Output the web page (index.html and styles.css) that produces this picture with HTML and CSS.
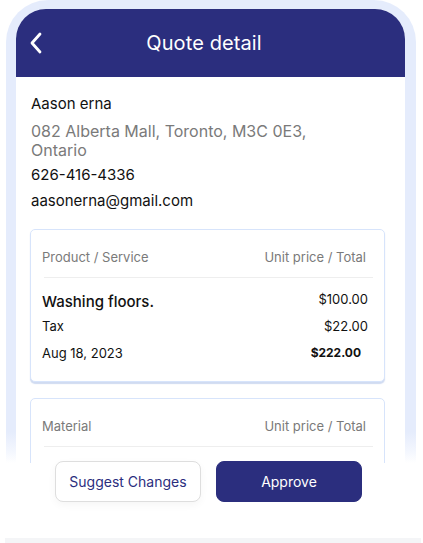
FILE: index.html
```html
<!DOCTYPE html>
<html lang="en">
<head>
<meta charset="utf-8">
<title>Quote detail</title>
<link rel="stylesheet" href="styles.css">
</head>
<body>
<div class="stage">
  <div class="phone">
    <div class="screen">
      <header class="topbar">
        <svg class="back" width="16" height="22" viewBox="0 0 16 22" aria-hidden="true">
          <polyline points="11,2 3,11 11,20" fill="none" stroke="#fff" stroke-width="2.8" stroke-linecap="round" stroke-linejoin="round"/>
        </svg>
        <h1 class="title">Quote detail</h1>
        <span class="spacer"></span>
      </header>
      <div class="content">
        <section class="contact">
          <p class="name">Aason erna</p>
          <p class="addr">082 Alberta Mall, Toronto, M3C 0E3,<br>Ontario</p>
          <p class="line phone-no">626-416-4336</p>
          <p class="line email">aasonerna@gmail.com</p>
        </section>
        <section class="card card-main">
          <div class="card-head"><span>Product / Service</span><span>Unit price / Total</span></div>
          <div class="divider"></div>
          <div class="row row-item"><span class="item-name">Washing floors.</span><span class="amt">$100.00</span></div>
          <div class="row row-tax"><span>Tax</span><span class="amt">$22.00</span></div>
          <div class="row row-total"><span>Aug 18, 2023</span><span class="total">$222.00</span></div>
        </section>
        <section class="card card-material">
          <div class="card-head"><span>Material</span><span>Unit price / Total</span></div>
          <div class="divider"></div>
        </section>
      </div>
    </div>
  </div>
  <div class="actions">
    <div class="btns">
      <button class="btn btn-ghost">Suggest Changes</button>
      <button class="btn btn-primary">Approve</button>
    </div>
    <div class="bottom-line"></div>
  </div>
</div>
</body>
</html>
```
FILE: styles.css
```css
* { box-sizing: border-box; }
html, body { margin: 0; padding: 0; background: #fff; }
body {
  font-family: Inter, "Noto Sans", "Liberation Sans", sans-serif;
  color: #111;
  width: 423px;
  height: 543px;
  overflow: hidden;
}
.stage {
  position: relative;
  width: 423px;
  height: 543px;
  overflow: hidden;
}
.phone {
  margin-left: 6px;
  width: 410px;
  height: 543px;
  padding: 9px 11px 0 10px;
  border-radius: 42px 42px 0 0;
  background: linear-gradient(to bottom, #e5ecfc 0, #e5ecfc 432px, #f4f7fe 452px, #ffffff 463px);
}
.screen {
  height: 100%;
  background: #fff;
  border-radius: 30px 30px 0 0;
  overflow: hidden;
}
.topbar {
  height: 68px;
  background: #2b2e7e;
  display: flex;
  align-items: center;
  padding: 0 14px 0 13px;
}
.back { display: block; flex: none; }
.title {
  flex: 1;
  margin: 0;
  text-align: center;
  color: #fff;
  font-size: 20px;
  font-weight: 400;
  letter-spacing: 0.1px;
  padding-right: 12px;
}
.spacer { width: 16px; flex: none; }
.content {
  height: 386px;
  overflow: hidden;
  padding: 17px 20px 0 14px;
}
.contact { padding-left: 1px; }
.contact p { margin: 0; }
.name { font-size: 15px; line-height: 20px; color: #111; }
.addr { font-size: 16px; line-height: 19px; color: #7a7a7a; margin-top: 7.5px !important; }
.line { font-size: 15px; line-height: 20px; color: #111; }
.phone-no { margin-top: 5.5px !important; }
.email { margin-top: 6px !important; }
.card {
  border: 1px solid #d7e4fb;
  border-radius: 5px;
  padding: 0 0 19px 11px;
  background: #fff;
}
.card-main {
  margin-top: 18px;
  box-shadow: 0 2px 1px rgba(170, 190, 230, 0.55);
}
.card + .card { margin-top: 16px; }
.card-material { height: 120px; }
.card-head {
  display: flex;
  justify-content: space-between;
  font-size: 13px;
  line-height: 18px;
  color: #7a7a7a;
  padding: 18px 18px 11px 0;
}
.divider {
  height: 1px;
  background: #eeeeee;
  margin: 0 11px 0 2px;
}
.row {
  display: flex;
  justify-content: space-between;
  font-size: 13px;
  line-height: 18px;
  color: #111;
  padding-right: 16px;
}
.row-item { margin-top: 12.5px; line-height: 22px; }
.item-name { font-size: 15px; font-weight: 500; }
.row-item .amt { line-height: 16px; }
.row-tax { margin-top: 4.5px; }
.row-total { margin-top: 9px; padding-right: 23px; }
.total { font-weight: 700; font-size: 12px; }
.actions {
  position: absolute;
  left: 0;
  right: 0;
  top: 463px;
  bottom: 0;
  background: #fff;
  display: flex;
  flex-direction: column;
}
.btns {
  display: flex;
  gap: 15px;
  padding-left: 55px;
  margin-top: -2px;
}
.btn {
  height: 41px;
  border-radius: 8px;
  font-family: Inter, "Noto Sans", "Liberation Sans", sans-serif;
  font-size: 14px;
  cursor: pointer;
}
.btn-ghost {
  width: 146px;
  background: #fff;
  border: 1px solid #dedede;
  color: #2b2e7e;
  box-shadow: 0 3px 8px rgba(0, 0, 0, 0.04);
}
.btn-primary {
  width: 146px;
  background: #2b2e7e;
  border: 1px solid #2b2e7e;
  color: #fff;
}
.bottom-line {
  margin: auto 2px 0 5px;
  height: 5px;
  background: #f4f5f7;
}
```
